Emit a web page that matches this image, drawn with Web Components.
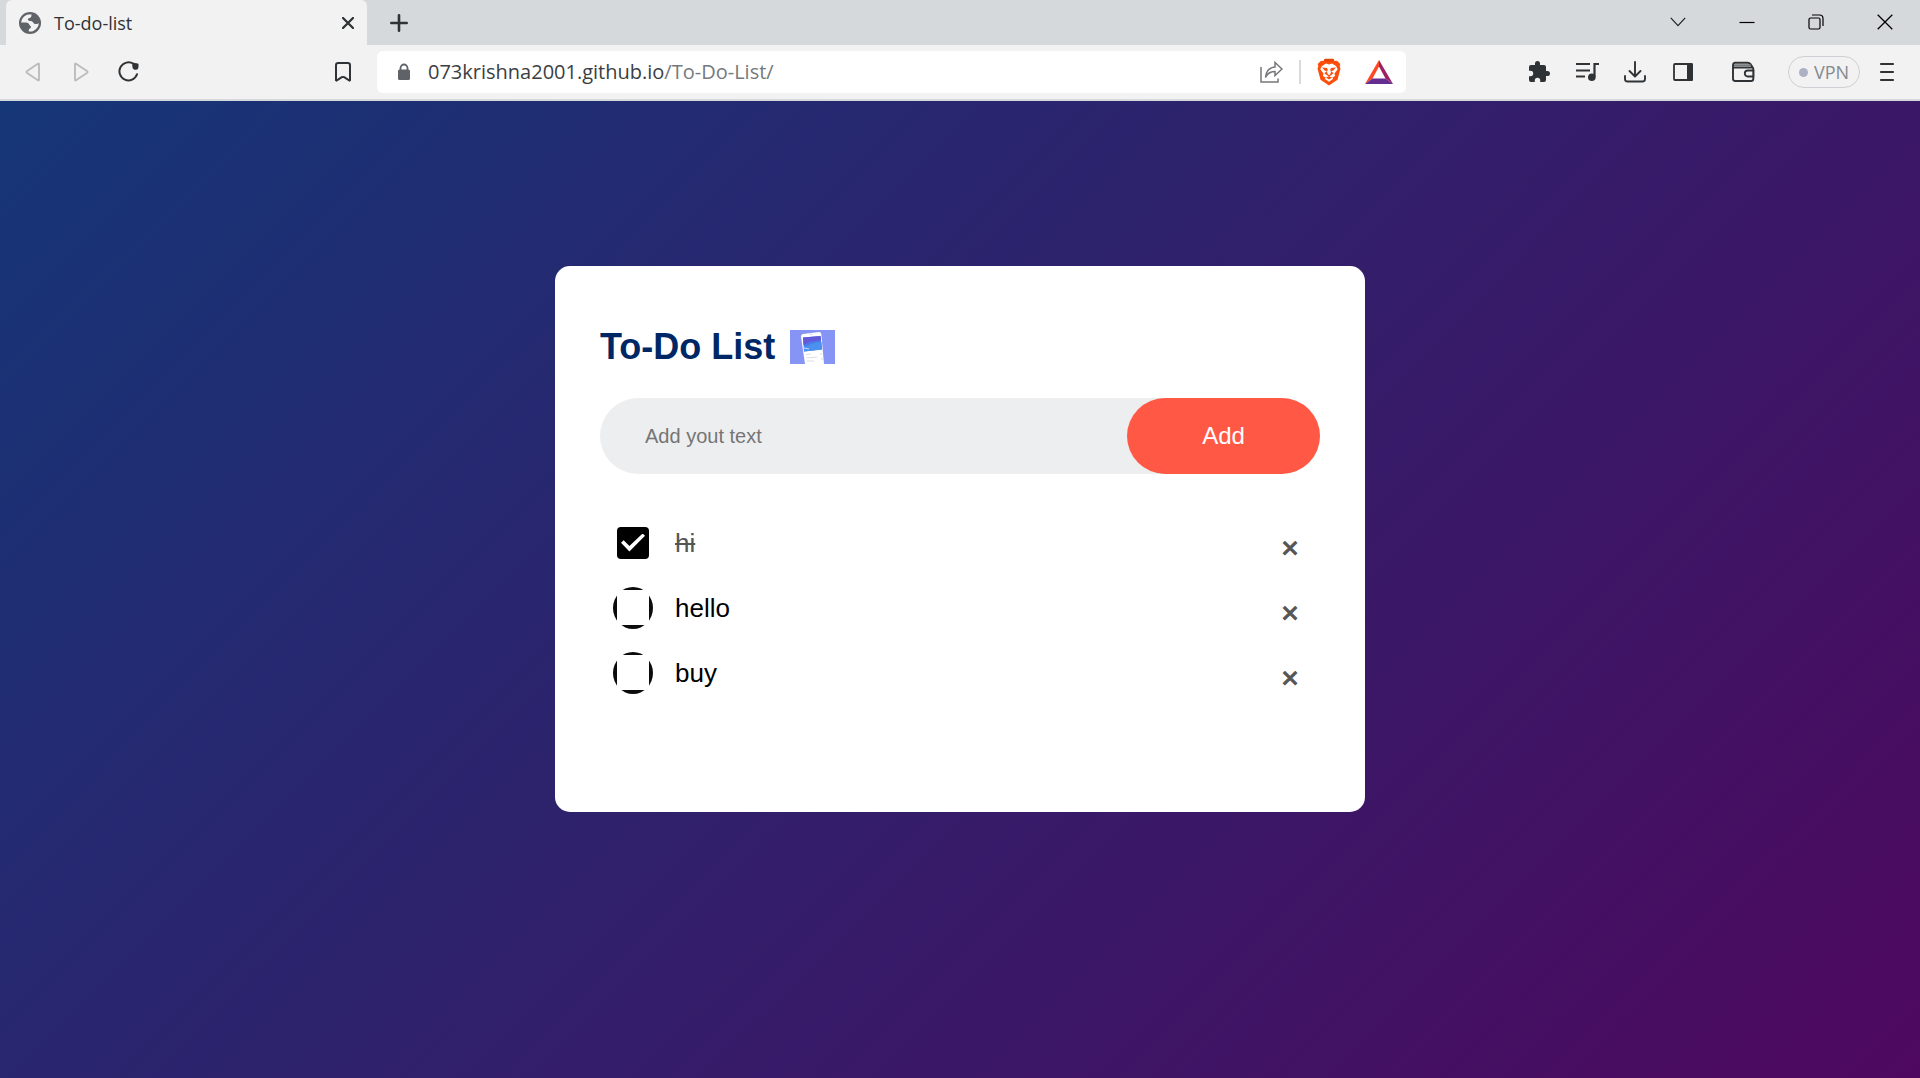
<!DOCTYPE html>
<html lang="en">
<head>
<meta charset="utf-8">
<meta name="viewport" content="width=device-width, initial-scale=1">
<title>To-do-list</title>
<style>
  html, body { height: 100%; margin: 0; }
  body { font-family: "Liberation Sans", Arial, sans-serif; }
</style>
</head>
<body>
<browser-window>
  <tab-strip slot="tabs"><browser-tab>To-do-list</browser-tab></tab-strip>
  <tool-bar slot="toolbar"><address-bar><span>073krishna2001.github.io<span style="color:#76797c">/To-Do-List/</span></span></address-bar></tool-bar>
  <todo-app>
    <todo-item done>hi</todo-item>
    <todo-item>hello</todo-item>
    <todo-item>buy</todo-item>
  </todo-app>
</browser-window>

<script>
const define = (name, html, setup) => {
  const template = document.createElement('template');
  template.innerHTML = html;
  customElements.define(name, class extends HTMLElement {
    constructor() {
      super();
      this.attachShadow({ mode: 'open' }).append(template.content.cloneNode(true));
    }
    connectedCallback() { if (setup) setup(this, this.shadowRoot); }
  });
};

const icons = {
  globe: [22, 22, '<circle cx="11" cy="11" r="11" fill="#5f6368"/><path d="M9.500 2.400C5.500 3 2.400 6.500 2.200 10.500h5c1.600 0 2.600 1 3.200 2.200.5 1 1.700 1.300 1.700 2.300 0 1.500-2.300 1.300-2.300 3v1.500c1.800.3 3.500 0 5-.8 3-1.500 4.900-4.300 5-7.700-1 1-3 1.500-4.500.7-1.600-.9-1.400-2.300-3.200-2.600-1.500-.3-3.200-.1-3.200-1.600 0-1.600 2-1.200 3-2.200.8-.8.200-2 1-2.700z" fill="#f2f2f2"/><path d="M2 12c2 1.500 4.500 1.800 5.500 3.200.7 1 .2 2.600 1.300 4.200-3.800-.8-6.500-3.700-6.800-7.400z" fill="#5f6368"/>'],
  tabClose: [12, 12, '<path d="M1 1l10 10M11 1L1 11" stroke="#303336" stroke-width="2.300" stroke-linecap="round"/>'],
  plus: [18, 18, '<path d="M9 1.300v15.400M1.300 9h15.400" stroke="#303336" stroke-width="2.600" stroke-linecap="round"/>'],
  chevron: [16, 10, '<path d="M.8.800L8 8.600 15.200.800" fill="none" stroke="#222" stroke-width="1.200"/>'],
  minimize: [16, 16, '<path d="M.500 8.500h15" stroke="#000" stroke-width="1.200"/>'],
  restore: [16, 16, '<rect x="1" y="4" width="11" height="11" rx="1.500" fill="none" stroke="#000" stroke-width="1.200"/><path d="M4 1h7.500Q15 1 15 4.500V12" fill="none" stroke="#000" stroke-width="1.200"/>'],
  close: [16, 16, '<path d="M.7.7l14.600 14.600M15.300.7L.7 15.300" stroke="#000" stroke-width="1.300"/>'],
  back: [16, 20, '<path d="M14 2.300v15.400q0 1.300-1.100.5L1.800 10.700q-.8-.7 0-1.400L12.900 1.800q1.100-.8 1.100.5z" fill="none" stroke="#babcbe" stroke-width="1.900"/>'],
  forward: [16, 20, '<path d="M2 2.300v15.400q0 1.300 1.100.5l11.100-7.500q.8-.7 0-1.400L3.100 1.800Q2 1 2 2.300z" fill="none" stroke="#babcbe" stroke-width="1.900"/>'],
  reload: [22, 22, '<path d="M15.500 2.900A9 9 0 1 0 19 13.200" fill="none" stroke="#303336" stroke-width="2" stroke-linecap="round"/><path d="M14.500 2.500Q15 1.500 17 2q1 .2 2 .2 1.600 0 1.600 1.600 0 1-.2 2 .3 2.700-2.400 3-3.200.2-3.600-2.800-.2-2 .1-3.500z" fill="#303336"/>'],
  bookmark: [16, 20, '<path d="M3.200 1h9.600Q15 1 15 3.200V18.200l-.6.4-5.200-3.400q-1.200-.6-2.400 0L1.600 18.600 1 18.200V3.200Q1 1 3.200 1z" fill="none" stroke="#303336" stroke-width="2"/>'],
  lock: [14, 18, '<path d="M3.500 8V5a3.500 3.500 0 0 1 7 0v3" fill="none" stroke="#5f6368" stroke-width="1.800"/><rect x="1" y="6.500" width="12" height="10.500" rx="1.500" fill="#5f6368"/>'],
  share: [24, 24, '<path d="M2 7v15h17v-3.500M6.500 17.500C7 11 10 7.500 16 7V2.500L23 9l-7 6.500V11.500C11.500 11.500 8.500 13.500 6.500 17.500z" fill="none" stroke="#75777a" stroke-width="1.500"/>'],
  lion: [24, 28, '<path d="M8 1h8l1.800 2 2.200-.2L23.300 6l-.6 2.300.8 2.200-3 11.200L12 27.500 3.500 21.700.5 10.500l.8-2.200L.700 6 4 2.800 6.200 3z" fill="#fb4f0b"/><path d="M7 1.600L8 .7h8l1 .9-1.500 2.200h-7z" fill="#e64605"/><path d="M12 6.500l3-1 4 2.500 1.700 3.300-3.200 4.200.6 2.500-3 1.700 1.200 1-4.300 3-4.300-3 1.200-1-3-1.700.6-2.500-3.200-4.200L5 8l4-2.500z" fill="#fff"/><path d="M5 9.500l5 .5.8 1.500-.8 2.500.8 2.200L12 17l1.200-.8L14 14l-.8-2.500L14 10l5-.5-3 3.200-2 .2 2.600 2.300-2.600 2L12 18.500l-2-1.300-2.600-2L10 12.900l-2-.2zM9 19.500l3-1.200 3 1.200-3 2z" fill="#fb4f0b"/><path d="M12 11v5" stroke="#fff" stroke-width="1.700"/>'],
  triangle: [28, 24, '<path d="M14 0v6.500L7.500 18.500 0 24z" fill="#ff4724"/><path d="M14 0l14 24-7.500-5.500L14 6.500z" fill="#9e1f63"/><path d="M0 24l7.500-5.500h13L28 24z" fill="#662d91"/>'],
  puzzle: [24, 24, '<path d="M20.500 11H19V7a2 2 0 0 0-2-2h-4V3.500a2.500 2.500 0 0 0-5 0V5H4a2 2 0 0 0-2 2v3.800h1.500a2.700 2.700 0 0 1 0 5.400H2V20a2 2 0 0 0 2 2h3.800v-1.500a2.700 2.700 0 0 1 5.400 0V22H17a2 2 0 0 0 2-2v-4h1.500a2.500 2.500 0 0 0 0-5z" fill="#303336"/>'],
  playlist: [26, 22, '<path d="M2 3h14M2 9.500h14M2 15.500h9M20.500 16V3h4.500" fill="none" stroke="#303336" stroke-width="2.200"/><circle cx="17.800" cy="16.300" r="3.800" fill="#303336"/>'],
  download: [24, 24, '<path d="M12 2v14M6.500 11L12 16.500 17.500 11M2 16v3q0 2.500 2.500 2.500h15Q22 21.500 22 19v-3" fill="none" stroke="#303336" stroke-width="1.900" stroke-linecap="round" stroke-linejoin="round"/>'],
  sidebar: [22, 20, '<rect x="2" y="2" width="18" height="16" rx="1" fill="none" stroke="#303336" stroke-width="1.800"/><path d="M15 1h4.500Q21 1 21 2.500v15q0 1.500-1.500 1.500H15z" fill="#303336"/>'],
  wallet: [24, 22, '<path d="M2 5V4q0-2.200 2.200-2.200h12.500q1.800 0 2.900 1.400L21.500 6q.8 1 .8 2.300v9.400q0 2.300-2.300 2.300H4.200Q2 20 2 17.800zM2.500 6.500h19" fill="none" stroke="#303336" stroke-width="1.900"/><path d="M3 4.200h16.500" stroke="#777a7d" stroke-width="2"/><path d="M22.300 9.500h-5.500a3 3 0 0 0 0 6h5.500z" fill="#f2f2f2" stroke="#303336" stroke-width="1.900"/>'],
  menu: [16, 20, '<path d="M2 2h12M2 10h12M2 18h12" stroke="#303336" stroke-width="2.200" stroke-linecap="round"/>'],
  phone: [45, 34, '<path d="M0 0h45v34H0z" fill="#8694f5"/><path d="M13 4l16-2q2 0 2.300 2L34 34H15L11 6.500Q11 4.300 13 4z" fill="#fff"/><path d="M13 7.500l17.500-1.500L32 19.500 14 21.500z" fill="#4a7de8"/><path d="M13 7.500l17.500-1.500.5 4L20 12l-6.600 3z" fill="#6459d8"/><path d="M14 17l10-4 7.500-1 .5 7.500L14 21.500z" fill="#4b91ef"/><path d="M14 18l5 1" stroke="#c9d6ff"/><path d="M19 4.500l4-.4M16 24.500l5-.5M16.500 28l11-1M17 31h7" stroke="#d3d5dc" stroke-width=".8"/><path d="M31 23v2M32 28v2" stroke="#d5d7de"/>']
};

customElements.define('ui-icon', class extends HTMLElement {
  constructor() { super(); this.attachShadow({ mode: 'open' }); }
  connectedCallback() {
    const [w, h, body] = icons[this.getAttribute('name')];
    this.shadowRoot.innerHTML = `<style>:host{display:inline-flex;flex:none}svg{display:block}</style>
      <svg width="${w}" height="${h}" viewBox="0 0 ${w} ${h}" fill="none" aria-hidden="true">${body}</svg>`;
  }
});

const buttonReset = 'button{display:flex;align-items:center;justify-content:center;flex:none;padding:0;border:0;background:none;font:inherit;color:inherit;cursor:pointer}';

define('browser-window', `
  <style>
    :host { display: flex; flex-direction: column; min-height: 100%; }
    main { display: flex; flex: 1; }
    main ::slotted(*) { flex: 1; }
  </style>
  <slot name="tabs"></slot><slot name="toolbar"></slot><main><slot></slot></main>`);

define('tab-strip', `
  <style>
    ${buttonReset}
    :host { display: flex; height: 45px; padding: 0 1px 0 6px; background: #d5d9dc; }
    .new { width: 64px; }
    .window { display: flex; margin-left: auto; }
    .window button { width: 69px; height: 43px; }
  </style>
  <slot></slot>
  <button class="new" aria-label="New tab"><ui-icon name="plus"></ui-icon></button>
  <div class="window">
    <button aria-label="Search tabs"><ui-icon name="chevron"></ui-icon></button>
    <button aria-label="Minimize"><ui-icon name="minimize"></ui-icon></button>
    <button aria-label="Restore"><ui-icon name="restore"></ui-icon></button>
    <button aria-label="Close"><ui-icon name="close"></ui-icon></button>
  </div>`);

define('browser-tab', `
  <style>
    ${buttonReset}
    :host { display: flex; align-items: center; gap: 13px; box-sizing: border-box; width: 361px;
      padding: 0 7px 0 13px; border-radius: 6px 6px 0 0; background: #f2f2f2; color: #303336;
      font: 18px/24px "Open Sans", sans-serif; }
    span { flex: 1; }
    button { width: 24px; height: 24px; }
  </style>
  <ui-icon name="globe"></ui-icon><span><slot></slot></span>
  <button aria-label="Close tab"><ui-icon name="tabClose"></ui-icon></button>`);

define('tool-bar', `
  <style>
    ${buttonReset}
    :host { display: flex; align-items: center; height: 54px; padding: 0 9px;
      background: #f2f2f2; border-bottom: 2px solid #d5d9dc; font-family: "Open Sans", sans-serif; }
    button { width: 48px; height: 42px; }
    .bookmark { margin: 0 10px 0 166px; }
    ::slotted(address-bar) { flex: 1; margin-right: 109px; }
    .wallet { margin: 0 21px 0 12px; }
    .vpn { width: 72px; height: 32px; margin-right: 3px; gap: 6px; box-sizing: border-box;
      border: 1px solid #cdd1d5; border-radius: 16px; color: #84898f; font-size: 18px; }
    .vpn i { width: 9px; height: 9px; border-radius: 50%; background: #aeb1c4; }
  </style>
  <button aria-label="Back"><ui-icon name="back"></ui-icon></button>
  <button aria-label="Forward"><ui-icon name="forward"></ui-icon></button>
  <button aria-label="Reload"><ui-icon name="reload"></ui-icon></button>
  <button class="bookmark" aria-label="Bookmark"><ui-icon name="bookmark"></ui-icon></button>
  <slot></slot>
  <button aria-label="Extensions"><ui-icon name="puzzle"></ui-icon></button>
  <button aria-label="Media"><ui-icon name="playlist"></ui-icon></button>
  <button aria-label="Downloads"><ui-icon name="download"></ui-icon></button>
  <button aria-label="Sidebar"><ui-icon name="sidebar"></ui-icon></button>
  <button class="wallet" aria-label="Wallet"><ui-icon name="wallet"></ui-icon></button>
  <button class="vpn"><i></i>VPN</button>
  <button aria-label="Menu"><ui-icon name="menu"></ui-icon></button>`);

define('address-bar', `
  <style>
    ${buttonReset}
    :host { display: flex; align-items: center; height: 42px; box-sizing: border-box;
      padding: 0 2px 0 20px; border-radius: 6px; background: #fff; color: #3b3e42; }
    .url { flex: 1; margin-left: 17px; font-size: 20px; line-height: 28px; outline: 0; white-space: nowrap; }
    button { width: 50px; height: 42px; }
    hr { width: 2px; height: 24px; margin: 0 3px; border: 0; background: #d8dadc; }
  </style>
  <ui-icon name="lock"></ui-icon>
  <div class="url" role="textbox" aria-label="Address" tabindex="0"><slot></slot></div>
  <button aria-label="Share"><ui-icon name="share"></ui-icon></button>
  <hr>
  <button aria-label="Shields"><ui-icon name="lion"></ui-icon></button>
  <button aria-label="Rewards"><ui-icon name="triangle"></ui-icon></button>`);

define('todo-app', `
  <style>
    :host { display: block; padding: 15px; background: linear-gradient(135deg, #153677, #4e085f); }
    section { box-sizing: border-box; max-width: 810px; margin: 150px auto 30px; padding: 60px 45px 107px;
      border-radius: 15px; background: #fff; }
    h2 { display: flex; align-items: center; gap: 15px; margin: 0 0 30px; color: #002765;
      font-size: 36px; line-height: 42px; }
    form { display: flex; margin-bottom: 36px; border-radius: 45px; background: #edeef0; }
    input { flex: 1; min-width: 0; padding: 0 0 0 45px; border: 0; outline: 0; background: none;
      font: 20px/24px "Liberation Sans", Arial, sans-serif; }
    input::placeholder { color: #757575; }
    form button { width: 193px; height: 76px; border: 0; border-radius: 60px; background: #ff5945; color: #fff;
      font: 24px/28px "Liberation Sans", Arial, sans-serif; cursor: pointer; }
  </style>
  <section>
    <h2>To-Do List <ui-icon name="phone"></ui-icon></h2>
    <form>
      <input type="text" placeholder="Add yout text" aria-label="New task">
      <button type="submit">Add</button>
    </form>
    <div role="list"><slot></slot></div>
  </section>`, (host, root) => {
    const input = root.querySelector('input');
    root.querySelector('form').onsubmit = event => {
      event.preventDefault();
      if (!input.value.trim()) return;
      const item = document.createElement('todo-item');
      item.textContent = input.value;
      host.append(item);
      input.value = '';
    };
  });

define('todo-item', `
  <style>
    :host { display: flex; align-items: center; height: 65px; padding: 0 0 0 13px; color: #000; }
    :host([done]) label { color: #555; text-decoration: line-through; }
    label { display: flex; flex: 1; align-items: center; gap: 22px; font-size: 26px; line-height: 30px; }
    input { appearance: none; display: grid; place-items: center; width: 40px; height: 42px; margin: 0; border-radius: 50%;
      background: linear-gradient(#fff, #fff) center / 32px 35px no-repeat #0c0c0c; }
    input:checked { width: 32px; height: 32px; margin: 0 4px; border-radius: 4px; background: #000; }
    input:checked::before { content: ""; width: 24px; height: 18px; background: #fff;
      clip-path: polygon(0 51%, 11% 38%, 35% 70%, 90% 0, 100% 12%, 35% 100%); }
    button { width: 60px; height: 60px; padding: 10px 0 0; border: 0; background: none; color: #555;
      font: 30px/40px "Liberation Sans", Arial, sans-serif; -webkit-text-stroke: 1px #555; cursor: pointer; }
  </style>
  <label><input type="checkbox"><span><slot></slot></span></label>
  <button aria-label="Delete">×</button>`, (host, root) => {
    host.setAttribute('role', 'listitem');
    const box = root.querySelector('input');
    box.checked = host.hasAttribute('done');
    box.onchange = () => host.toggleAttribute('done', box.checked);
    root.querySelector('button').onclick = () => host.remove();
  });
</script>
</body>
</html>
